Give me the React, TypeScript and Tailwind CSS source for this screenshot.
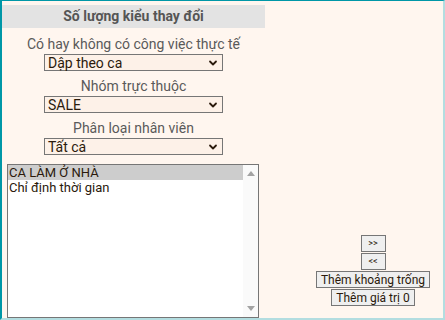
import { ChevronDown } from "lucide-react";

const font = { fontFamily: "Roboto, 'Noto Sans', sans-serif" };

function FakeSelect({ value }: { value: string }) {
  return (
    <div className="mx-auto flex h-[17px] w-[179px] items-center justify-between border border-[#767676] bg-[#fdf1e8] pl-[3px] pr-[3px] text-[14px] leading-[15px] text-[#2b1a0c]">
      <span className="pt-[1px]">{value}</span>
      <ChevronDown className="h-[12px] w-[12px] text-[#2b1a0c]" strokeWidth={3.6} />
    </div>
  );
}

function Field({ label, value }: { label: string; value: string }) {
  return (
    <div className="mt-[7px] flex flex-col">
      <div className="text-center text-[14px] leading-[16px] text-[#5a5a5a]">{label}</div>
      <div className="mt-[2px]">
        <FakeSelect value={value} />
      </div>
    </div>
  );
}

function Btn({ children, small }: { children: React.ReactNode; small?: boolean }) {
  return (
    <button
      className={
        "border border-[#767676] bg-[#efefef] leading-none text-[#2b1a0c] " +
        (small ? "h-[17px] w-[25px] text-[9px]" : "h-[17px] px-[4px] text-[12px]")
      }
    >
      {children}
    </button>
  );
}

export default function App() {
  return (
    <div
      style={font}
      className="flex h-[320px] w-[445px] border-t border-r-2 border-b-2 border-l-2 border-t-[#0097a7] border-r-[#b3dde0] border-b-[#b3dde0] border-l-[#0097a7] bg-[#fff6ef]"
    >
      <div className="flex w-[263px] flex-col">
        <div className="mt-[4px] flex h-[23px] items-center justify-center bg-[#e3e3e3] text-[14px] font-bold text-[#555]">
          Số lượng kiểu thay đổi
        </div>
        <div className="mt-[1px]">
          <Field label="Có hay không có công việc thực tế" value="Dập theo ca" />
          <Field label="Nhóm trực thuộc" value="SALE" />
          <Field label="Phân loại nhân viên" value="Tất cả" />
        </div>
        <div className="ml-[5px] mt-[9px] flex w-[252px] flex-1 border border-[#767676] bg-white text-[13px] leading-[15px] text-[#2b1a0c]">
          <div className="flex-1">
            <div className="bg-[#cdcdcd] pl-[1px]">CA LÀM Ở NHÀ</div>
            <div className="pl-[1px]">Chỉ định thời gian</div>
          </div>
          <div className="flex w-[15px] flex-col items-center justify-between bg-[#fafafa] py-[6px]">
            <div className="h-0 w-0 border-x-[4px] border-b-[5px] border-x-transparent border-b-[#a3a3a3]" />
            <div className="h-0 w-0 border-x-[4px] border-t-[5px] border-x-transparent border-t-[#a3a3a3]" />
          </div>
        </div>
      </div>
      <div className="flex flex-1 flex-col items-center justify-end pb-[12px] pl-[38px]">
        <div className="flex flex-col items-center gap-[1px]">
          <Btn small>&gt;&gt;</Btn>
          <Btn small>&lt;&lt;</Btn>
          <Btn>Thêm khoảng trống</Btn>
          <Btn>Thêm giá trị 0</Btn>
        </div>
      </div>
    </div>
  );
}
